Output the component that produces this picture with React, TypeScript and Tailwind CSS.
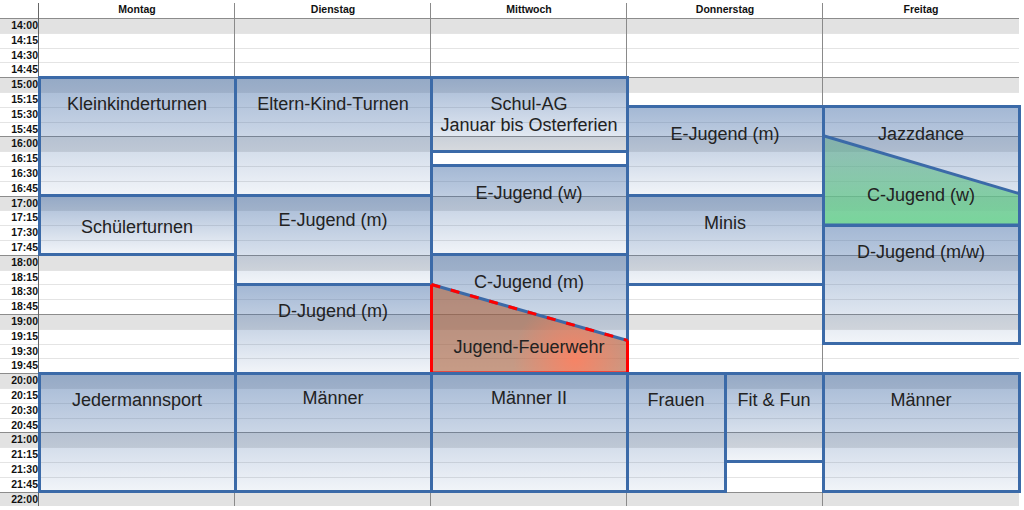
const days = ['Montag', 'Dienstag', 'Mittwoch', 'Donnerstag', 'Freitag'];

const times = Array.from({ length: 33 }, (_, i) => {
  const m = 14 * 60 + i * 15;
  return `${Math.floor(m / 60)}:${String(m % 60).padStart(2, '0')}`;
});

// quarter index from 14:00
const q = (t: string) => {
  const [h, m] = t.split(':').map(Number);
  return (h - 14) * 4 + m / 15;
};

type Ev = {
  lines: string[];
  col: number;
  span: number;
  from: string;
  to: string;
  pt?: string;
  extra?: 'feuerwehr' | 'cjugend';
};

const events: Ev[] = [
  { lines: ['Kleinkinderturnen'], col: 2, span: 2, from: '15:00', to: '17:00' },
  { lines: ['Schülerturnen'], col: 2, span: 2, from: '17:00', to: '18:00', pt: 'pt-[20px]' },
  { lines: ['Jedermannsport'], col: 2, span: 2, from: '20:00', to: '22:00' },
  { lines: ['Eltern-Kind-Turnen'], col: 4, span: 2, from: '15:00', to: '17:00' },
  { lines: ['E-Jugend (m)'], col: 4, span: 2, from: '17:00', to: '18:30', pt: 'pt-[13px]' },
  { lines: ['D-Jugend (m)'], col: 4, span: 2, from: '18:30', to: '20:00' },
  { lines: ['Männer'], col: 4, span: 2, from: '20:00', to: '22:00', pt: 'pt-[13px]' },
  { lines: ['Schul-AG', 'Januar bis Osterferien'], col: 6, span: 2, from: '15:00', to: '16:15' },
  { lines: ['E-Jugend (w)'], col: 6, span: 2, from: '16:30', to: '18:00' },
  { lines: ['C-Jugend (m)'], col: 6, span: 2, from: '18:00', to: '20:00', extra: 'feuerwehr' },
  { lines: ['Männer II'], col: 6, span: 2, from: '20:00', to: '22:00', pt: 'pt-[13px]' },
  { lines: ['E-Jugend (m)'], col: 8, span: 2, from: '15:30', to: '17:00' },
  { lines: ['Minis'], col: 8, span: 2, from: '17:00', to: '18:30' },
  { lines: ['Frauen'], col: 8, span: 1, from: '20:00', to: '22:00' },
  { lines: ['Fit & Fun'], col: 9, span: 1, from: '20:00', to: '21:30' },
  { lines: ['Jazzdance'], col: 10, span: 2, from: '15:30', to: '17:30', extra: 'cjugend' },
  { lines: ['D-Jugend (m/w)'], col: 10, span: 2, from: '17:30', to: '19:30' },
  { lines: ['Männer'], col: 10, span: 2, from: '20:00', to: '22:00' },
];

function Feuerwehr() {
  return (
    <>
      <svg
        className="absolute -inset-[3px] w-[calc(100%+6px)] h-[calc(100%+6px)]"
        viewBox="0 0 199 121.4"
        preserveAspectRatio="none"
      >
        <defs>
          <radialGradient id="fw-glow" cx="145" cy="106" r="62" gradientUnits="userSpaceOnUse">
            <stop offset="0" stopColor="#ff8060" stopOpacity="0.85" />
            <stop offset="1" stopColor="#ff8060" stopOpacity="0" />
          </radialGradient>
        </defs>
        <polygon points="1.5,31.5 197.5,87.5 197.5,119.9 1.5,119.9" fill="#a85c34" fillOpacity="0.58" />
        <polygon points="1.5,31.5 197.5,87.5 197.5,119.9 1.5,119.9" fill="url(#fw-glow)" />
        <line x1="1.5" y1="31.5" x2="197.5" y2="87.5" stroke="#3b6aa8" strokeWidth="3" />
        <line x1="1.5" y1="31.5" x2="197.5" y2="87.5" stroke="#ff0000" strokeWidth="3" strokeDasharray="9 11" />
        <polyline points="1.5,31.5 1.5,119.9 197.5,119.9 197.5,87.5" fill="none" stroke="#ff0000" strokeWidth="3" />
      </svg>
      <div className="relative mt-[44px]">Jugend-Feuerwehr</div>
    </>
  );
}

function CJugend() {
  return (
    <>
      <svg
        className="absolute -inset-[3px] w-[calc(100%+6px)] h-[calc(100%+6px)]"
        viewBox="0 0 199 121.4"
        preserveAspectRatio="none"
      >
        <defs>
          <linearGradient id="cj-fill" x1="0" y1="30" x2="0" y2="120" gradientUnits="userSpaceOnUse">
            <stop offset="0" stopColor="#4aa678" stopOpacity="0.35" />
            <stop offset="1" stopColor="#72d496" stopOpacity="0.95" />
          </linearGradient>
        </defs>
        <polygon points="1.5,30.7 197.5,88.7 197.5,119.9 1.5,119.9" fill="url(#cj-fill)" />
        <line x1="1.5" y1="30.7" x2="197.5" y2="88.7" stroke="#3b6aa8" strokeWidth="3" />
        <polyline points="1.5,30.7 1.5,119.9 197.5,119.9 197.5,88.7" fill="none" stroke="#3b6aa8" strokeWidth="3" />
      </svg>
      <div className="relative mt-[40px]">C-Jugend (w)</div>
    </>
  );
}

export default function App() {
  return (
    <div className="w-[1024px] h-[510px] bg-white overflow-hidden font-['Liberation_Sans',Arial,sans-serif]">
      <div className="grid w-[1019px] grid-cols-[39px_repeat(10,98px)] grid-rows-[18px_repeat(33,14.8px)]">
        {/* header */}
        {days.map((d, i) => (
          <div
            key={d}
            className="row-start-1 pt-[2px] text-center text-[10.5px] font-bold leading-[14px] text-[#111]"
            style={{ gridColumn: `${i * 2 + 2} / span 2` }}
          >
            {d}
          </div>
        ))}

        {/* time rows */}
        {times.map((t, i) => (
          <div
            key={t}
            className={
              i % 4 === 0
                ? 'col-span-full flex border-t border-[#8c8c8c] bg-[#e2e2e2]'
                : 'col-span-full flex border-t border-[#e4e4e4] bg-white'
            }
            style={{ gridRow: i + 2 }}
          >
            <div className="w-[38px] text-right text-[10.5px] font-bold leading-[13.8px] text-[#111]">{t}</div>
          </div>
        ))}

        {/* vertical lines */}
        <div className="col-start-2 row-span-full mt-[3px] -ml-px border-l border-[#666]" />
        <div className="col-start-4 row-span-full mt-[3px] -ml-px border-l border-[#8a8a8a]" />
        <div className="col-start-6 row-span-full mt-[3px] -ml-px border-l border-[#8a8a8a]" />
        <div className="col-start-8 row-span-full mt-[3px] -ml-px border-l border-[#8a8a8a]" />
        <div className="col-start-10 row-span-full mt-[3px] -ml-px border-l border-[#8a8a8a]" />

        {/* events */}
        {events.map((e, i) => (
          <div
            key={i}
            className={`relative -m-[1.5px] border-[3px] border-[#3b6aa8] bg-linear-to-b from-[#4a72aa80] to-[#4a72aa14] text-center text-[18px] leading-[21px] text-[#222] ${e.pt ?? 'pt-[15.5px]'}`}
            style={{ gridRow: `${q(e.from) + 2} / ${q(e.to) + 2}`, gridColumn: `${e.col} / span ${e.span}` }}
          >
            {e.lines.map((l) => (
              <div key={l} className="relative">
                {l}
              </div>
            ))}
            {e.extra === 'feuerwehr' && <Feuerwehr />}
            {e.extra === 'cjugend' && <CJugend />}
          </div>
        ))}
      </div>
    </div>
  );
}
